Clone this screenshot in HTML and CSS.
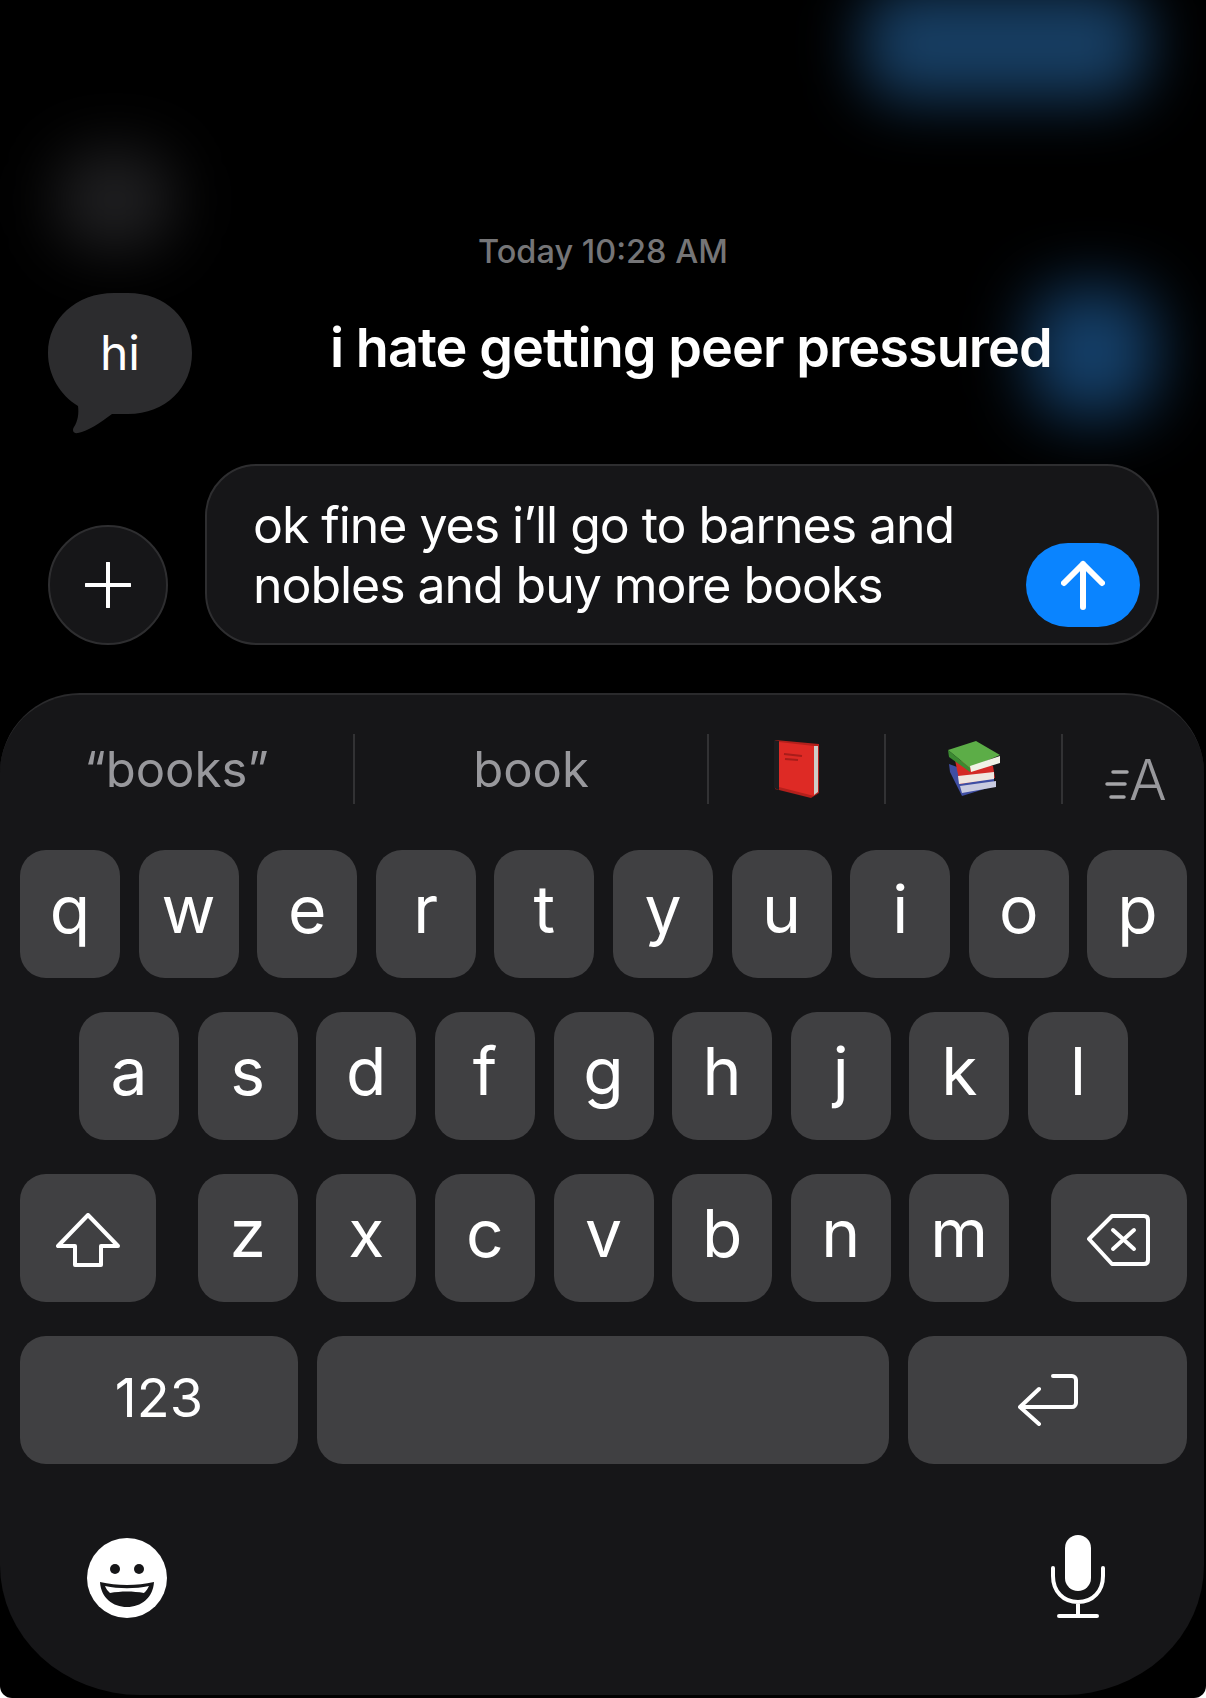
FILE: index.html
```html
<!DOCTYPE html>
<html>
<head>
  <title>Messages</title>
  <link rel="stylesheet" href="styles.css">
</head>
<body>
<div class="screen">
  <!-- blurred shapes behind the thread -->
  <div class="glow glow-top"></div>
  <div class="glow glow-side"></div>
  <div class="glow glow-grey"></div>

  <div class="time">Today 10:28 AM</div>

  <div class="msg-row">
    <div class="bubble">
      <svg class="bubble-shape" width="144" height="142" viewBox="0 0 144 142">
        <path d="M66 0H80C118 0 144 26 144 60C144 94 118 121 80 121H64C52 130 40 138 30 140C25 141 24 137 26 134C30 128 31 120 30 113C12 102 0 82 0 60C0 26 28 0 66 0Z" fill="#2c2c2e"/>
      </svg>
      <span class="bubble-text">hi</span>
    </div>
    <div class="title">i hate getting peer pressured</div>
  </div>

  <div class="composer">
    <div class="plus">
      <svg width="46" height="46" viewBox="0 0 46 46"><path d="M23 1V45M1 23H45" class="ico" stroke-width="4"/></svg>
    </div>
    <div class="input">
      <div class="input-text">ok fine yes i’ll go to barnes and<br>nobles and buy more books</div>
      <div class="send">
        <svg width="44" height="50" viewBox="0 0 44 50"><path d="M22 47V4M3 23L22 4L41 23" class="ico" stroke-width="6"/></svg>
      </div>
    </div>
  </div>

  <div class="keyboard">
    <div class="suggest">
      <div class="cell">“books”</div>
      <div class="cell">book</div>
      <div class="cell">
        <svg width="50" height="60" viewBox="0 0 50 60">
          <path d="M3 1L47 5V54L39 59L3 50Z" fill="#b3201c"/>
          <path d="M2 1L7 2V51L2 49Z" fill="#1d1d1f"/>
          <path d="M7 3L42 7V57L7 48Z" fill="#de2a25"/>
          <path d="M42 7L46 7V53L42 56Z" fill="#cfcdc8"/>
          <path d="M12 15L30 17M13 20L26 21" stroke="#a81d1a" stroke-width="2"/>
        </svg>
      </div>
      <div class="cell">
        <svg width="56" height="58" viewBox="0 0 56 58">
          <path d="M3 24L30 34L48 38L48 46L16 56L4 32Z" fill="#3f4ea3"/>
          <path d="M14 46L50 41L50 47L16 53Z" fill="#c9cbe0"/>
          <path d="M9 20L47 26L49 38L14 44Z" fill="#d32a26"/>
          <path d="M12 36L48 32L48 39L13 44Z" fill="#efe6e0"/>
          <path d="M2 10L30 1L54 15L24 28Z" fill="#5cad47"/>
          <path d="M2 10L24 28L24 32L3 17Z" fill="#3b8a31"/>
          <path d="M24 26L54 16L54 23L25 32Z" fill="#f0f2e6"/>
        </svg>
      </div>
      <div class="cell cell-format">
        <svg width="24" height="36" viewBox="0 0 24 36"><path d="M8 4H22M2 16H20M6 29H19" class="ico ico-grey" stroke-width="3.5"/></svg>
        <span class="format-a">A</span>
      </div>
    </div>

    <div class="keys">
      <div class="row">
        <div class="key">q</div><div class="key">w</div><div class="key">e</div><div class="key">r</div><div class="key">t</div>
        <div class="key">y</div><div class="key">u</div><div class="key">i</div><div class="key">o</div><div class="key">p</div>
      </div>
      <div class="row row-mid">
        <div class="key">a</div><div class="key">s</div><div class="key">d</div><div class="key">f</div><div class="key">g</div>
        <div class="key">h</div><div class="key">j</div><div class="key">k</div><div class="key">l</div>
      </div>
      <div class="row row-split">
        <div class="key key-side">
          <svg width="64" height="54" viewBox="0 0 64 54"><path d="M32 2L2 33H19V52H45V33H62Z" class="ico" stroke-width="4"/></svg>
        </div>
        <div class="letters">
          <div class="key">z</div><div class="key">x</div><div class="key">c</div><div class="key">v</div>
          <div class="key">b</div><div class="key">n</div><div class="key">m</div>
        </div>
        <div class="key key-side">
          <svg width="64" height="52" viewBox="0 0 64 52"><path d="M2 25L25 2H57C59.500 2 61 3.500 61 6V46C61 48.500 59.500 50 57 50H25Z" class="ico" stroke-width="4"/><path d="M26 16L47 35M47 16L26 35" class="ico" stroke-width="4"/></svg>
        </div>
      </div>
      <div class="row">
        <div class="key key-num">123</div>
        <div class="key key-space"></div>
        <div class="key key-return">
          <svg width="60" height="52" viewBox="0 0 60 52"><path d="M35 2H54C56 2 58 4 58 6V29C58 31 56 33 54 33H2M21 15L2 33L21 50" class="ico" stroke-width="4"/></svg>
        </div>
      </div>
    </div>

    <div class="bottom">
      <svg width="80" height="80" viewBox="0 0 80 80">
        <circle cx="40" cy="40" r="40" fill="#fff"/>
        <circle cx="28" cy="31" r="5" fill="#161618"/>
        <circle cx="52" cy="31" r="5" fill="#161618"/>
        <path d="M13 44C30 48 50 48 67 44C66 60 54 69 40 69C26 69 14 60 13 44Z" fill="#161618"/>
        <path d="M18 48C32 51 48 51 62 48C60 52 59 53 57 55C46 53 34 53 23 55C21 53 19 51 18 48Z" fill="#fff"/>
      </svg>
      <svg width="58" height="86" viewBox="0 0 58 86">
        <rect x="16" y="0" width="26" height="56" rx="13" fill="#fff"/>
        <path d="M4 33V41C4 56 14 67 29 67C44 67 54 56 54 41V33M29 67V81M10 81H48" class="ico" stroke-width="4"/>
      </svg>
    </div>
  </div>
</div>
</body>
</html>
```

FILE: styles.css
```css
html, body {
  margin: 0;
  background: #fff;
}

.screen {
  position: relative;
  isolation: isolate;
  width: 1206px;
  height: 1698px;
  overflow: hidden;
  display: flex;
  flex-direction: column;
  border-radius: 0 0 12px 12px;
  font-family: Inter, "Liberation Sans", sans-serif;
  color: #fff;
  background-color: #000;
}

.glow {
  position: absolute;
  z-index: -1;
  border-radius: 40px;
}

.glow-top {
  left: 862px;
  top: -12px;
  width: 286px;
  height: 112px;
  background: #173e63;
  filter: blur(30px);
}

.glow-side {
  left: 1030px;
  top: 288px;
  width: 126px;
  height: 128px;
  background: #15406a;
  filter: blur(32px);
}

.glow-grey {
  left: 56px;
  top: 150px;
  width: 118px;
  height: 100px;
  background: #1f1f21;
  filter: blur(30px);
}

.ico {
  fill: none;
  stroke: #fff;
  stroke-linecap: round;
  stroke-linejoin: round;
}

.ico-grey { stroke: #a5a5a8; }

/* thread */
.time {
  padding-top: 232px;
  text-align: center;
  font-size: 32.5px;
  line-height: 40px;
  font-weight: 500;
  color: #757577;
}

.msg-row {
  display: flex;
  margin: 21px 0 0 48px;
  height: 142px;
}

.bubble {
  display: grid;
  width: 144px;
  height: 142px;
}

.bubble-shape,
.bubble-text {
  grid-area: 1 / 1;
}

.bubble-text {
  text-align: center;
  font-size: 48px;
  font-weight: 400;
  line-height: 120px;
}

.title {
  margin: 25px 0 0 138px;
  font-size: 54px;
  line-height: 60px;
  font-weight: 600;
  letter-spacing: -0.95px;
  white-space: nowrap;
}

/* composer */
.composer {
  display: flex;
  align-items: flex-end;
  gap: 37px;
  margin: 29px 0 0 48px;
}

.plus {
  box-sizing: border-box;
  width: 120px;
  height: 120px;
  border: 2px solid #2e2e30;
  border-radius: 50%;
  background: #161618;
  display: flex;
  align-items: center;
  justify-content: center;
}

.input {
  box-sizing: border-box;
  width: 954px;
  height: 181px;
  padding: 29px 17px 16px 46px;
  display: flex;
  justify-content: space-between;
  border: 2px solid #2e2e30;
  border-radius: 52px;
  background: #161618;
}

.input-text {
  font-size: 50px;
  line-height: 60px;
  font-weight: 400;
  letter-spacing: -1.05px;
  white-space: nowrap;
}

.send {
  align-self: flex-end;
  width: 114px;
  height: 84px;
  border-radius: 42px;
  background: #0a84ff;
  display: flex;
  align-items: center;
  justify-content: center;
}

/* keyboard */
.keyboard {
  box-sizing: border-box;
  margin: 48px 2px 0 0;
  height: 1002px;
  padding-top: 39px;
  border-top: 2px solid #2a2a2c;
  border-radius: 80px 80px 140px 140px / 80px 80px 130px 130px;
  background: #161618;
}

.suggest {
  display: grid;
  grid-template-columns: 353px 354px 177px 177px 1fr;
  height: 70px;
}

.cell {
  display: flex;
  align-items: center;
  justify-content: center;
  font-size: 49px;
  font-weight: 400;
  color: #98989c;
  border-left: 2px solid #323234;
}

.cell:first-child { border-left: 0; }

.cell-format {
  justify-content: flex-start;
  align-items: flex-end;
  padding-left: 42px;
}

.format-a {
  font-size: 56px;
  font-weight: 300;
  line-height: 56px;
  margin-bottom: -4px;
}

.keys {
  display: flex;
  flex-direction: column;
  gap: 34px;
  margin-top: 46px;
  padding: 0 17px 0 20px;
}

.row {
  display: flex;
  gap: 18.6px;
}

.row-mid { justify-content: center; }

.row-split { justify-content: space-between; }

.letters {
  display: flex;
  gap: 18.6px;
}

.key {
  box-sizing: border-box;
  flex: none;
  width: 100px;
  height: 128px;
  padding-bottom: 10px;
  border-radius: 26px;
  background: #404042;
  display: flex;
  align-items: center;
  justify-content: center;
  font-size: 66px;
  font-weight: 400;
}

.key-side {
  width: 136px;
  padding-bottom: 0;
}

.key-side svg { margin-top: 4px; }

.key-num {
  width: 278px;
  padding-bottom: 6px;
  font-size: 54px;
}

.key-space { flex: 1; }

.key-return {
  width: 279px;
  padding-bottom: 0;
}

.bottom {
  display: flex;
  justify-content: space-between;
  align-items: center;
  margin-top: 71px;
  padding: 0 97px 0 87px;
}
```
